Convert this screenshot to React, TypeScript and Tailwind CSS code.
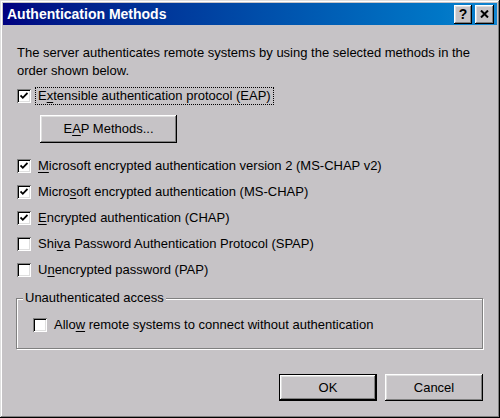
import React from "react";

const raised =
  "shadow-[inset_-1px_-1px_#000,inset_1px_1px_#fff,inset_-2px_-2px_#808080,inset_2px_2px_#dfdfdf]";

function U({ children }: { children: React.ReactNode }) {
  return <span className="underline underline-offset-[2px] decoration-1">{children}</span>;
}

function Box({ checked }: { checked?: boolean }) {
  return (
    <div className="w-[14px] h-[14px] shrink-0 bg-white flex items-center justify-center shadow-[inset_1px_1px_#808080,inset_-1px_-1px_#fff,inset_2px_2px_#000,inset_-2px_-2px_#dfdfdf]">
      {checked && (
        <svg width="8" height="8" viewBox="0 0 8 8">
          <path d="M0.5 3.5 L2.8 5.8 L7.5 1" stroke="#000" strokeWidth="1.8" fill="none" />
        </svg>
      )}
    </div>
  );
}

function Row({
  checked,
  children,
  focus,
}: {
  checked?: boolean;
  children: React.ReactNode;
  focus?: boolean;
}) {
  return (
    <div className="flex items-center h-[18px]">
      <Box checked={checked} />
      <div
        className={
          focus
            ? "ml-[4px] px-[2px] h-[18px] flex items-center border border-dotted border-black"
            : "ml-[7px] h-[18px] flex items-center"
        }
      >
        {children}
      </div>
    </div>
  );
}

function Btn({
  children,
  def,
  className,
}: {
  children: React.ReactNode;
  def?: boolean;
  className?: string;
}) {
  return (
    <div className={(def ? "border border-black " : "") + className}>
      <div className={"w-full h-full flex items-center justify-center bg-[#c6c3c6] " + raised}>
        {children}
      </div>
    </div>
  );
}

export default function App() {
  return (
    <div className="w-[500px] h-[418px] bg-[#c6c3c6] p-[3px] flex flex-col text-[13px] text-black font-['Liberation_Sans',Arial,sans-serif] shadow-[inset_-1px_-1px_#000,inset_1px_1px_#dfdfdf,inset_-2px_-2px_#808080,inset_2px_2px_#fff]">
      <div className="h-[22px] flex items-center pl-[4px] pr-[3px] bg-linear-to-r from-[#000080] to-[#1084d0]">
        <span className="text-white font-bold text-[14px]">Authentication Methods</span>
        <div className="ml-auto flex gap-[3px]">
          <div className={"w-[18px] h-[19px] bg-[#c6c3c6] flex items-center justify-center font-bold text-[14px] " + raised}>
            ?
          </div>
          <div className={"w-[19px] h-[19px] bg-[#c6c3c6] flex items-center justify-center " + raised}>
            <svg width="9" height="8" viewBox="0 0 9 8">
              <path d="M1 0.5 L8 7.5 M8 0.5 L1 7.5" stroke="#000" strokeWidth="2" />
            </svg>
          </div>
        </div>
      </div>

      <div className="flex flex-col px-[14px]">
        <p className="mt-[19px] leading-[18px]">
          The server authenticates remote systems by using the selected methods in the
          <br />
          order shown below.
        </p>

        <div className="mt-[7px]">
          <Row checked focus>
            <span>
              E<U>x</U>tensible authentication protocol (EAP)
            </span>
          </Row>
        </div>

        <Btn className="mt-[10px] ml-[23px] w-[137px] h-[28px]">
          <span>
            E<U>A</U>P Methods...
          </span>
        </Btn>

        <div className="mt-[14px] flex flex-col gap-[8px]">
          <Row checked>
            <span>
              <U>M</U>icrosoft encrypted authentication version 2 (MS-CHAP v2)
            </span>
          </Row>
          <Row checked>
            <span>
              Micro<U>s</U>oft encrypted authentication (MS-CHAP)
            </span>
          </Row>
          <Row checked>
            <span>
              <U>E</U>ncrypted authentication (CHAP)
            </span>
          </Row>
          <Row>
            <span>
              Shi<U>v</U>a Password Authentication Protocol (SPAP)
            </span>
          </Row>
          <Row>
            <span>
              U<U>n</U>encrypted password (PAP)
            </span>
          </Row>
        </div>

        <div className="relative mt-[19px] -ml-[1px] w-[467px] h-[51px] border border-[#808080] shadow-[1px_1px_#fff,inset_1px_1px_#fff]">
          <span className="absolute -top-[10px] left-[6px] px-[2px] bg-[#c6c3c6] leading-[18px]">
            Unauthenticated access
          </span>
          <div className="mt-[17px] ml-[16px]">
            <Row>
              <span>
                Allo<U>w</U> remote systems to connect without authentication
              </span>
            </Row>
          </div>
        </div>

        <div className="mt-[25px] flex justify-end gap-[8px]">
          <Btn def className="w-[98px] h-[27px]">
            OK
          </Btn>
          <Btn className="w-[98px] h-[27px]">Cancel</Btn>
        </div>
      </div>
    </div>
  );
}
